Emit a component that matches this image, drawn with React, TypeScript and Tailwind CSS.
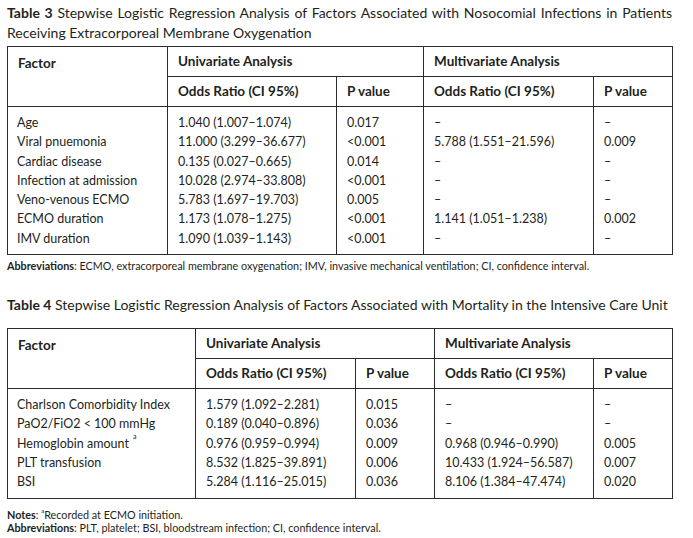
import React from "react";

type Row = [string, string, string, string, string, boolean?];

const table3: Row[] = [
  ["Age", "1.040 (1.007–1.074)", "0.017", "–", "–"],
  ["Viral pnuemonia", "11.000 (3.299–36.677)", "<0.001", "5.788 (1.551–21.596)", "0.009"],
  ["Cardiac disease", "0.135 (0.027–0.665)", "0.014", "–", "–"],
  ["Infection at admission", "10.028 (2.974–33.808)", "<0.001", "–", "–"],
  ["Veno-venous ECMO", "5.783 (1.697–19.703)", "0.005", "–", "–"],
  ["ECMO duration", "1.173 (1.078–1.275)", "<0.001", "1.141 (1.051–1.238)", "0.002"],
  ["IMV duration", "1.090 (1.039–1.143)", "<0.001", "–", "–"],
];

const table4: Row[] = [
  ["Charlson Comorbidity Index", "1.579 (1.092–2.281)", "0.015", "–", "–"],
  ["PaO2/FiO2 < 100 mmHg", "0.189 (0.040–0.896)", "0.036", "–", "–"],
  ["Hemoglobin amount", "0.976 (0.959–0.994)", "0.009", "0.968 (0.946–0.990)", "0.005", true],
  ["PLT transfusion", "8.532 (1.825–39.891)", "0.006", "10.433 (1.924–56.587)", "0.007"],
  ["BSI", "5.284 (1.116–25.015)", "0.036", "8.106 (1.384–47.474)", "0.020"],
];

const line = "border-[#2b2b2b]";
const head = "pl-[10px] text-left font-bold text-[13.5px]";

function StatTable({ rows, widths }: { rows: Row[]; widths: number[] }) {
  return (
    <table className={`w-[665px] border-collapse border ${line} table-fixed text-[12.5px] text-[#231f20]`}>
      <colgroup>
        {widths.map((w, i) => (
          <col key={i} style={{ width: w }} />
        ))}
      </colgroup>
      <thead>
        <tr className="h-[30px]">
          <th rowSpan={2} className={`border-r ${line} align-top pt-[6px] ${head}`}>
            Factor
          </th>
          <th colSpan={2} className={`border-r border-b ${line} ${head}`}>
            Univariate Analysis
          </th>
          <th colSpan={2} className={`border-b ${line} ${head}`}>
            Multivariate Analysis
          </th>
        </tr>
        <tr className={`h-[30px] border-b ${line}`}>
          <th className={`border-r ${line} ${head}`}>Odds Ratio (CI 95%)</th>
          <th className={`border-r ${line} ${head}`}>P value</th>
          <th className={`border-r ${line} ${head}`}>Odds Ratio (CI 95%)</th>
          <th className={head}>P value</th>
        </tr>
      </thead>
      <tbody>
        {rows.map((r, i) => {
          const first = i === 0;
          const last = i === rows.length - 1;
          const pad = first ? "pt-[6px]" : last ? "pb-[6px]" : "";
          return (
            <tr key={i} className="leading-[19.3px]">
              <td className={`border-r ${line} pl-[9px] ${pad}`}>
                {r[0]}
                {r[5] && <sup className="text-[7px] ml-[4px] align-[5px]">a</sup>}
              </td>
              <td className={`border-r ${line} pl-[10px] ${pad}`}>{r[1]}</td>
              <td className={`border-r ${line} pl-[10px] ${pad}`}>{r[2]}</td>
              <td className={`border-r ${line} pl-[10px] ${pad}`}>{r[3]}</td>
              <td className={`pl-[10px] ${pad}`}>{r[4]}</td>
            </tr>
          );
        })}
      </tbody>
    </table>
  );
}

export default function App() {
  return (
    <div className="w-[693px] h-[538px] bg-white px-[7px] pt-[3px] text-[#231f20] font-['Lato',sans-serif]">
      <p className="w-[665px] text-[14px] leading-[20px] text-justify">
        <b>Table 3</b> Stepwise Logistic Regression Analysis of Factors Associated with Nosocomial Infections in Patients
        Receiving Extracorporeal Membrane Oxygenation
      </p>
      <div className="mt-[3px]">
        <StatTable rows={table3} widths={[160, 169, 87, 170, 79]} />
      </div>
      <p className="mt-[4px] text-[10.8px] leading-[13px] whitespace-nowrap">
        <b>Abbreviations</b>: ECMO, extracorporeal membrane oxygenation; IMV, invasive mechanical ventilation; CI,
        confidence interval.
      </p>
      <p className="mt-[23px] text-[14px] leading-[20px] whitespace-nowrap">
        <b>Table 4</b> Stepwise Logistic Regression Analysis of Factors Associated with Mortality in the Intensive Care Unit
      </p>
      <div className="mt-[13px]">
        <StatTable rows={table4} widths={[188, 160, 79, 159, 79]} />
      </div>
      <p className="mt-[9px] text-[10.8px] leading-[13px]">
        <b>Notes</b>: <sup className="text-[6px] align-[3px]">a</sup>Recorded at ECMO initiation.
      </p>
      <p className="text-[10.8px] leading-[13px]">
        <b>Abbreviations</b>: PLT, platelet; BSI, bloodstream infection; CI, confidence interval.
      </p>
    </div>
  );
}
